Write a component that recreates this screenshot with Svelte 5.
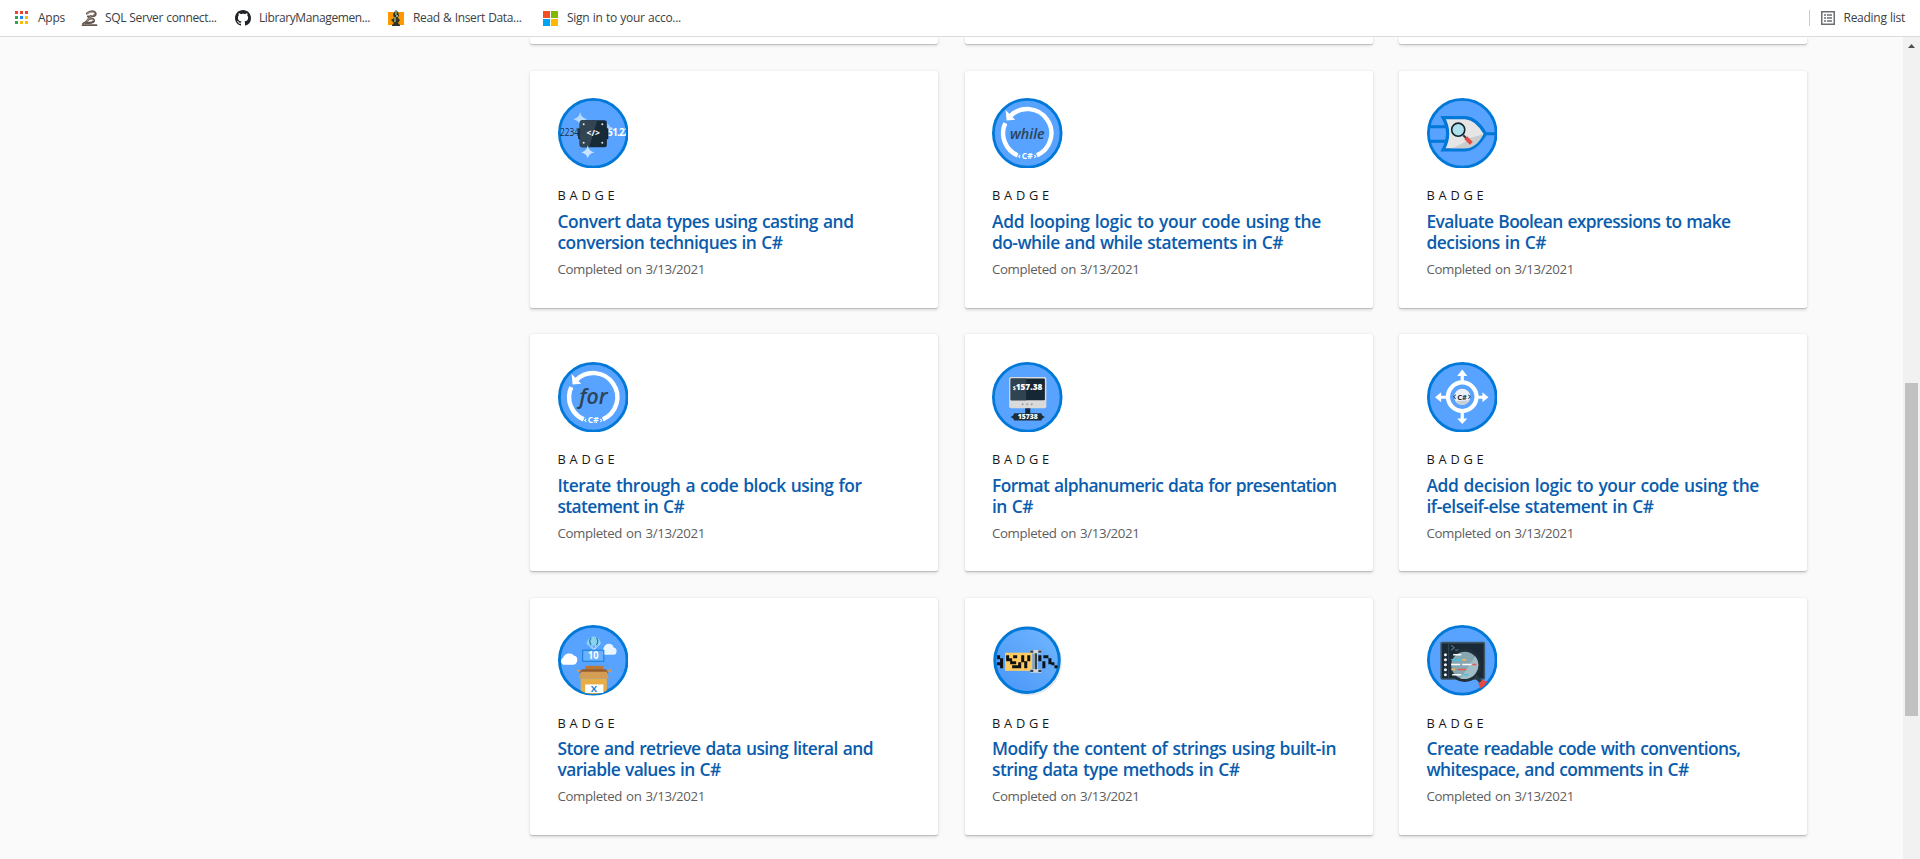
<script>
  const done = 'Completed on 3/13/2021';
  const cards = [
    { icon: 'cast', lines: [['Convert data types using casting and', 296], ['conversion techniques in C#', 225]] },
    { icon: 'while', lines: [['Add looping logic to your code using the', 329], ['do-while and while statements in C#', 291]] },
    { icon: 'bool', lines: [['Evaluate Boolean expressions to make', 304], ['decisions in C#', 119.5]] },
    { icon: 'for', lines: [['Iterate through a code block using for', 304], ['statement in C#', 126.5]] },
    { icon: 'format', lines: [['Format alphanumeric data for presentation', 344.5], ['in C#', 41]] },
    { icon: 'decision', lines: [['Add decision logic to your code using the', 332.5], ['if-elseif-else statement in C#', 227]] },
    { icon: 'store', lines: [['Store and retrieve data using literal and', 315.5], ['variable values in C#', 163]] },
    { icon: 'modify', lines: [['Modify the content of strings using built-in', 344], ['string data type methods in C#', 247.5]] },
    { icon: 'readable', lines: [['Create readable code with conventions,', 314], ['whitespace, and comments in C#', 262]] },
  ];

  const appColors = ['#ea4335', '#ea4335', '#ea4335', '#34a053', '#1a88ff', '#fbbc05', '#34a053', '#fbbc05', '#fbbc05'];

  // Spreads the tracking of a line so that it takes the given width.
  function fit(node, width) {
    const natural = node.getBoundingClientRect().width;
    const gap = (width - natural) / node.textContent.length;
    node.style.letterSpacing = gap.toFixed(3) + 'px';
  }
</script>

<div class="page">
  <header class="bar">
    <div class="mark apps">
      <svg width="14" height="14" viewBox="0 0 14 14">
        {#each appColors as c, i}
          <rect x={(i % 3) * 5} y={Math.floor(i / 3) * 5} width="3" height="3" fill={c} />
        {/each}
      </svg>
      <span use:fit={27}>Apps</span>
    </div>
    <div class="mark sql">
      <svg width="17" height="17" viewBox="0 0 17 17" fill="none" stroke-linecap="round">
        <path d="M6 3.5 Q10 0 13.5 2 Q16 4 13 6 L7 6.5 M10 6 L4.5 13 M9 9 Q13 8 13 11 Q12 13 6 13" stroke="#62564f" stroke-width="2.2" />
        <path d="M6.5 3.5 Q10 1 13 2.5 Q14.5 4.5 11 5.5 M9.5 6.5 L5 12.5 M9 9 Q12.5 8.5 12.5 10.5" stroke="#c1b5aa" stroke-width=".8" />
        <path d="M1.5 15.2 H15.5 M2 13.5 L5 12" stroke="#65574f" stroke-width="1.7" />
      </svg>
      <span use:fit={111.5}>SQL Server connect...</span>
    </div>
    <div class="mark git">
      <svg width="16" height="16" viewBox="0 0 16 16" fill="#1f2328"><path d="M8 0C3.58 0 0 3.58 0 8c0 3.54 2.29 6.53 5.47 7.59.4.07.55-.17.55-.38 0-.19-.01-.82-.01-1.49-2.01.37-2.53-.49-2.69-.94-.09-.23-.48-.94-.82-1.13-.28-.15-.68-.52-.01-.53.63-.01 1.08.58 1.23.82.72 1.21 1.87.87 2.33.66.07-.52.28-.87.51-1.07-1.78-.2-3.64-.89-3.64-3.95 0-.87.31-1.59.82-2.15-.08-.2-.36-1.02.08-2.12 0 0 .67-.21 2.2.82.64-.18 1.32-.27 2-.27s1.36.09 2 .27c1.53-1.04 2.2-.82 2.2-.82.44 1.1.16 1.92.08 2.12.51.56.82 1.27.82 2.15 0 3.07-1.87 3.75-3.65 3.95.29.25.54.73.54 1.48 0 1.07-.01 1.93-.01 2.2 0 .21.15.46.55.38A8.01 8.01 0 0 0 16 8c0-4.42-3.58-8-8-8Z" /></svg>
      <span use:fit={111}>LibraryManagemen...</span>
    </div>
    <div class="mark read">
      <svg width="16" height="16" viewBox="0 0 16 16">
        <rect y="2" width="16" height="13" fill="#ff9800" />
        <path d="M8 0 L10 2 L11 5 L10 8 L12 10 L10 13 L12 15 V16 H4 V15 L6 13 L3 10 L6 8 L5 4 Z" fill="#303326" />
        <path d="M8 1 V5 M7 7 V12" stroke="#77955b" stroke-width="2" />
        <path d="M9 5 V7" stroke="#b9c3c8" stroke-width="1.5" />
      </svg>
      <span use:fit={108.5}>Read &amp; Insert Data...</span>
    </div>
    <div class="mark ms">
      <svg width="15" height="15" viewBox="0 0 15 15">
        <rect width="7" height="7" fill="#f25022" /><rect x="8" width="7" height="7" fill="#7fba00" />
        <rect y="8" width="7" height="7" fill="#00a4ef" /><rect x="8" y="8" width="7" height="7" fill="#ffb900" />
      </svg>
      <span use:fit={114}>Sign in to your acco...</span>
    </div>
    <div class="reading">
      <svg width="14" height="14" viewBox="0 0 14 14" fill="none" stroke="#6b6e72">
        <rect x=".75" y=".75" width="12.5" height="12.5" stroke-width="1.5" />
        <path d="M3 4 H5 M6 4 H11 M3 7 H5 M6 7 H11 M3 10 H5 M6 10 H11" stroke-width="1.7" />
      </svg>
      <span use:fit={61.5}>Reading list</span>
    </div>
  </header>

  <div class="view">
    <main>
      <div class="grid">
        {#each [1, 2, 3] as n (n)}
          <div class="stub"></div>
        {/each}
        {#each cards as card (card.icon)}
          <article class="card">
            <svg class="badge" viewBox="0 0 70 70">
              {#if card.icon === 'modify'}
                <defs>
                  <linearGradient id="sky" x1="0" y1="1" x2="1" y2="0"><stop offset="0" stop-color="#4794f7" /><stop offset="1" stop-color="#72b8ff" /></linearGradient>
                </defs>
                <circle cx="36" cy="36.5" r="33.4" fill="#dcdcdc" />
                <circle cx="35.3" cy="35" r="34.3" fill="#f1f2f4" />
                <circle cx="34.8" cy="35" r="32" fill="url(#sky)" stroke="#0078d7" stroke-width="3" />
              {:else}
                <circle cx="35" cy="35" r="33.6" fill="#57a3ff" stroke="#0078d7" stroke-width="2.8" />
              {/if}

              {#if card.icon === 'cast'}
                <clipPath id="inner"><circle cx="35" cy="35" r="32.5" /></clipPath>
                <g clip-path="url(#inner)"><text x="49" y="38" font-size="9.8" font-weight="700" fill="#fff" textLength="22">51.22</text></g>
                <path d="M22 14 Q23 20 29 21 Q23 22 22 28 Q21 22 15 21 Q21 20 22 14" fill="#b9dbff" />
                <path d="M49 24 L51 28 L55 30 L49 31" fill="#a9d1ff" />
                <rect x="20" y="30" width="30" height="11" rx="1" fill="#17212c" />
                <text x="2" y="38" font-size="9.8" fill="#1c3046" textLength="19" lengthAdjust="spacingAndGlyphs">2234</text>
                <rect x="21.5" y="22" width="27" height="27" rx="2.5" fill="#172a38" />
                <path d="M24 22 H39 L31 49 H24 Q21.5 49 21.5 46 V25 Q21.5 22 24 22" fill="#334452" />
                <g fill="#e5e8ea"><circle cx="25.5" cy="26" r="1" /><circle cx="44" cy="26" r="1" /><circle cx="25.5" cy="44.5" r="1" /><circle cx="44" cy="44.5" r="1" /></g>
                <text x="35" y="38" font-size="8.5" font-weight="700" fill="#fff" text-anchor="middle">&lt;/&gt;</text>
                <path d="M29.5 47 Q30.5 53 36 54 Q30.5 55 29.5 60 Q28.5 55 23 54 Q28.5 53 29.5 47" fill="#c9e4ff" />
              {:else if card.icon === 'while' || card.icon === 'for'}
                <g fill="none" stroke="#fff" stroke-width="4.4">
                  <path d="M13.2 25 A24 24 0 0 0 25.5 57" />
                  <path d="M18 18 A24 24 0 1 1 44.5 57" />
                </g>
                <path d="M13.5 12 L14.5 22.3 L23 21.7 Z" fill="#fff" />
                {#if card.icon === 'while'}
                  <text x="17.8" y="40.3" class="slant" font-size="15" font-weight="600" textLength="34.5" lengthAdjust="spacingAndGlyphs">while</text>
                {:else}
                  <text x="21" y="42" class="slant" font-size="21" font-weight="600" textLength="28" lengthAdjust="spacingAndGlyphs">for</text>
                {/if}
                <text x="35" y="60.9" font-size="8.4" font-weight="700" fill="#fff" text-anchor="middle">C#</text>
                <path d="M28 56.5 l-1.5 1.5 l1.5 1.5 M42 56.5 l1.5 1.5 l-1.5 1.5" stroke="#fff" fill="none" />
              {:else if card.icon === 'bool'}
                <path d="M2 28.5 H20 M2 43 H20 M57 35.5 H69" stroke="#0078d7" stroke-width="3" />
                <path d="M16 19.5 H38 Q49 20 58 35.5 Q49 51 38 51.5 H16 Q25 35 16 19.5 Z" fill="#e5e5e5" stroke="#0078d7" stroke-width="3.2" />
                <path d="M56 36 Q49 50 38 50 H24 Q38 45 42 40 Q49 38 56 36" fill="#cbcccd" />
                <circle cx="31" cy="31.5" r="6.5" fill="#ace0ec" stroke="#15242e" stroke-width="1.6" />
                <path d="M36 37 L40 41" stroke="#263b47" stroke-width="2" />
                <path d="M38.5 39.5 L44 45" stroke="#e34c43" stroke-width="4" />
              {:else if card.icon === 'format'}
                <rect x="17" y="15" width="37" height="31" rx="2" fill="#dadada" />
                <rect x="18.5" y="16.5" width="34" height="21.5" rx="1" fill="#152634" />
                <path d="M18.5 16.5 H34 V38 H18.5Z" fill="#304352" />
                <g fill="#9a9ea0"><circle cx="30.5" cy="42" r="1" /><circle cx="35" cy="42" r="1" /><circle cx="39.5" cy="42" r="1" /></g>
                <path d="M33 46 H38 V52 H33Z" fill="#152634" />
                <path d="M22 51 H49 L50 53 L52.5 54.5 L50 56 L49 58 H22 L21 56 L18.5 54.5 L21 53Z" fill="#1c2e3b" />
                <text x="20.5" y="27.5" font-size="5.5" font-weight="700" fill="#fff">$</text>
                <text x="23.5" y="28" font-size="8.3" font-weight="800" fill="#fff" textLength="26.5" lengthAdjust="spacingAndGlyphs">157.38</text>
                <text x="25.5" y="57" font-size="7" font-weight="800" fill="#fff" textLength="20" lengthAdjust="spacingAndGlyphs">15738</text>
              {:else if card.icon === 'decision'}
                <circle cx="35" cy="34.5" r="14.2" fill="none" stroke="#fff" stroke-width="4.2" />
                <path d="M35 12 V20 M35 49 V57 M12 35 H20 M50 35 H56" stroke="#fff" stroke-width="3.2" />
                <path d="M35 7.5 L40 14 H30Z M35 61.5 L40 56 H30Z M8 35 L14 30 V40Z M61 35 L55 30 V40Z" fill="#fff" />
                <circle cx="35" cy="34.5" r="8" fill="#eef1f4" />
                <path d="M28 39 A8 8 0 0 0 42 38 Z" fill="#c9cfd6" />
                <text x="34.8" y="37.3" font-size="7.5" font-weight="700" fill="#102a3d" text-anchor="middle">C#</text>
                <path d="M28.5 32.5 l-2 2 l2 2 M41 32.5 l2 2 l-2 2" stroke="#274159" fill="none" />
              {:else if card.icon === 'store'}
                <path d="M5 39.5 A4 4 0 0 1 5 32.5 A6.5 6.5 0 0 1 16 30.5 Q20 31 19 36 Q18 39.5 15 39.5 Z" fill="#fff" />
                <path d="M45 29.5 Q43 26 45 23.5 Q47 17 53 19 Q55 20 55 22 Q59 23 58 27 Q58 29.5 55 29.5Z" fill="#e9f5ff" />
                <path d="M28.5 18.5 A7 7 0 0 1 42.5 18.5 L38 20.5 H33Z" fill="#8bd3ef" />
                <path d="M33 12.5 Q30 16 33 20 M38 12.5 Q41 16 38 20" stroke="#277fac" stroke-width="1.3" fill="none" />
                <path d="M29 18.5 L35.5 25 L42 18.5 M33 20 L35.5 25 L38 20" stroke="#cfe9ff" stroke-width=".8" fill="none" />
                <rect x="24.5" y="25" width="21" height="11" fill="#69b1ff" stroke="#177bd7" />
                <text x="35" y="34.2" font-size="10" font-weight="700" fill="#fff" text-anchor="middle" textLength="10.5" lengthAdjust="spacingAndGlyphs">10</text>
                <path d="M27 40.5 H45 V47 H27Z" fill="#bb7738" />
                <path d="M23.5 44 H48 L50 48 H21Z" fill="#965c2d" />
                <path d="M23 45 L19 47.5 L18.5 44Z M48 45 L53 47.5 L52.5 44Z" fill="#d9974d" />
                <path d="M23 46.5 H48.5 L50.5 53 H20.5Z" fill="#d59c55" />
                <path d="M22.5 53 H48.5 V65 Q43 68.5 35 68.5 Q27 68.5 22.5 65Z" fill="#e8ad44" />
                <rect x="27" y="59" width="18" height="8.5" fill="#fff" />
                <text x="35.7" y="66.5" font-size="9.5" font-weight="700" fill="#1683d8" text-anchor="middle">X</text>
              {:else if card.icon === 'modify'}
                <rect x="13" y="27.5" width="27" height="18" fill="#ffcb61" />
                <path fill="#101316" d="M5 30h3v3h3v10H8v-3H5v-3h3v-3H5zM14 30h3v3h3v3h4v3h-6v-3h-4zM20 40h6v3h-6zM21 30h4v3h-4zM26 37h3v6h-3zM29 30h3v7h-3zM32 36h3v3h-3zM35 30h3v6h-3zM32 39h3v4h-3zM46 30h3v6h-3zM51 30h5v3h-5zM50 36h3v7h-3zM56 33h3v6h-3zM59 37h3v3h3v3h-3v-3h-3z" />
                <path d="M38 26.5 H49 M43.5 27 V45 M38 45.5 H49" stroke="#cfd8de" stroke-width="3.6" />
                <path d="M38 26.5 h3 M46 26.5 h3 M43.5 28 V44 M38 45.5 h3 M46 45.5 h3" stroke="#343d43" stroke-width="2.3" />
              {:else}
                <rect x="14" y="17.5" width="43" height="36" rx="1" fill="#192936" stroke="#3f5667" stroke-width="1.5" />
                <path d="M21.5 18 V53" stroke="#30495a" />
                <g fill="#eceef0"><circle cx="18.3" cy="29.5" r="1.5" /><circle cx="18.3" cy="34.5" r="1.5" /><circle cx="18.3" cy="39.5" r="1.5" /><circle cx="18.3" cy="44.5" r="1.5" /><circle cx="18.3" cy="49.5" r="1.5" /></g>
                <path d="M24 20 L27 22.5 L24 25 M28 25 H32" stroke="#537087" fill="none" stroke-width="1.2" />
                <circle cx="37.5" cy="40" r="15" fill="#86a7b2" stroke="#222f3a" stroke-width="3" />
                <path d="M48 31 A14 14 0 0 1 33 53 Z" fill="#a1bdc5" />
                <g stroke-width="1.5"><path d="M26 29.5 H34 M24 39.3 H33 M35 39.3 H44 M25 49.5 H34" stroke="#fff" /><path d="M24 34.5 H34 M36 49.5 H41" stroke="#3cc4e2" /><path d="M35 34.5 H39 M24 44.3 H28" stroke="#ffb64a" /><path d="M30 44.3 H39 M45 39.3 H49" stroke="#f1584c" /></g>
                <path d="M48 50.5 L54 57" stroke="#283a45" stroke-width="3.6" />
                <path d="M51 58 L55 54.5 L60 56 Q57 61 53 63Z" fill="#e44840" />
              {/if}
            </svg>
            <p class="kind"><span use:fit={61}>BADGE</span></p>
            <h3>
              {#each card.lines as [text, width]}
                <span class="line"><span use:fit={width}>{text}</span></span>
              {/each}
            </h3>
            <p class="date"><span use:fit={147.5}>{done}</span></p>
          </article>
        {/each}
      </div>
    </main>
    <aside class="scroll">
      <svg width="17" height="17" viewBox="0 0 17 17"><path d="M5 11 L8.5 7 L12 11Z" fill="#505050" /></svg>
      <div class="thumb"></div>
    </aside>
  </div>
</div>

<style>
  :global(body) { background: #fafafa; overflow: hidden; }
  .page { height: 859px; overflow: hidden; display: flex; flex-direction: column; font-family: "Segoe UI", "Open Sans", "Noto Sans", sans-serif; }
  .bar { flex: none; box-sizing: border-box; height: 37px; display: flex; align-items: center; background: #fff; border-bottom: 1px solid #dadce0; font-size: 12px; color: #3c4043; padding-left: 15px; }
  .bar span { white-space: pre; word-spacing: .5px; padding-bottom: 1px; }
  .bar svg { flex: none; }
  .mark { display: flex; align-items: center; box-sizing: border-box; }
  .apps { width: 66px; gap: 9px; }
  .sql { width: 153.5px; gap: 7px; }
  .git { width: 153.5px; gap: 8.5px; }
  .read { width: 155px; gap: 9px; }
  .ms { gap: 9px; }
  .reading { margin-left: auto; margin-right: 15px; height: 16px; padding-left: 11px; border-left: 1px solid #c8cacd; display: flex; align-items: center; gap: 9px; }
  .view { flex: 1; min-height: 0; display: flex; }
  main { flex: 1; min-width: 0; padding-left: 530px; overflow: hidden; }
  .grid { display: grid; grid-template-columns: repeat(3, 408px); grid-template-rows: 7px repeat(3, 237px); column-gap: 26.5px; row-gap: 26.7px; }
  .stub, .card { background: #fff; border-radius: 2px; box-shadow: 0 1.6px 3.6px rgba(0, 0, 0, .132), 0 .3px .9px rgba(0, 0, 0, .11), 0 1px 1px rgba(0, 0, 0, .06); }
  .stub { border-radius: 0 0 2px 2px; }
  .card { box-sizing: border-box; padding: 27.3px 27.5px 0; display: flex; flex-direction: column; }
  .badge { display: block; flex: none; width: 70.5px; height: 70.5px; }
  .slant { font-style: italic; fill: #2d4459; }
  p, h3 { margin: 0; white-space: pre; }
  .kind { margin-top: 16.8px; font-size: 12.8px; line-height: 20px; color: #171717; }
  h3 { margin-top: 5.6px; font-size: 17.4px; line-height: 21px; font-weight: 600; color: #0a5cad; word-spacing: 1px; display: flex; flex-direction: column; }
  .line { display: block; height: 21px; }
  .date { margin-top: 6px; font-size: 13.3px; line-height: 20px; color: #5e5e5e; word-spacing: 1px; }
  .scroll { width: 17px; background: #f1f1f1; display: flex; flex-direction: column; align-items: center; }
  .scroll svg { flex: none; }
  .thumb { width: 13px; height: 333px; margin-top: 329px; background: #c1c1c1; }
</style>
